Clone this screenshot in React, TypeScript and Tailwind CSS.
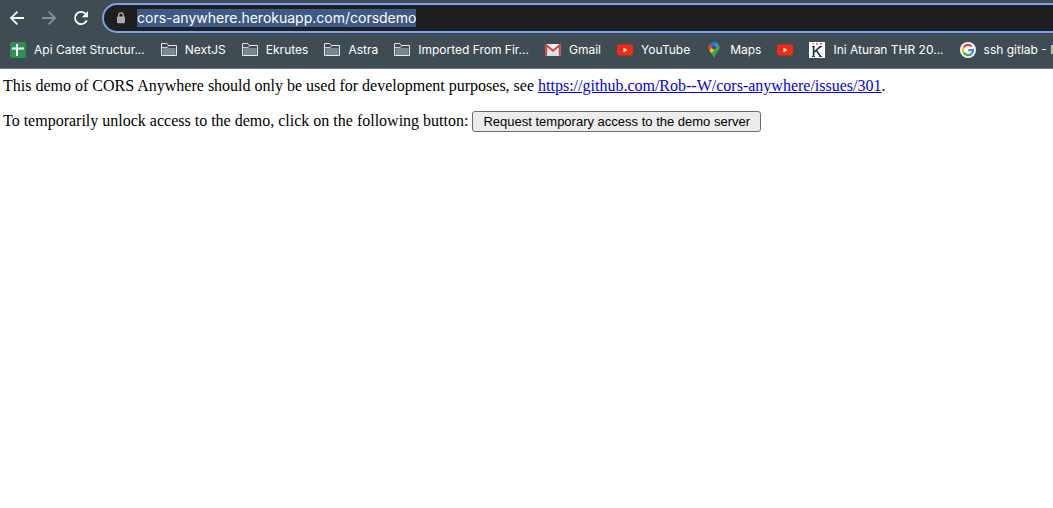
import React from "react";

function BackIcon({ flip = false }: { flip?: boolean }) {
  return (
    <svg viewBox="0 0 16 16" className={flip ? "size-4 -scale-x-100" : "size-4"} fill="none" stroke="currentColor" strokeWidth="1.8" aria-hidden="true">
      <path d="M15 8H2.4M8.4 1.6L2 8l6.4 6.4" />
    </svg>
  );
}

function ReloadIcon() {
  return (
    <svg viewBox="0 0 16 16" className="size-4" aria-hidden="true">
      <path d="M13.8 10.2A6.1 6.1 0 1 1 12.4 3.7" fill="none" stroke="currentColor" strokeWidth="1.8" />
      <path d="M15 1V7.2H8.8z" fill="currentColor" />
    </svg>
  );
}

function LockIcon() {
  return (
    <svg viewBox="0 0 10 12" className="h-3 w-2.5 shrink-0 text-[#a9adb2]" aria-hidden="true">
      <path d="M2.7 5.5V3.2a2.3 2.3 0 0 1 4.6 0v2.3" fill="none" stroke="currentColor" strokeWidth="1.3" />
      <rect x="1" y="4.6" width="8" height="6.6" rx="1" fill="currentColor" />
    </svg>
  );
}

function SheetIcon() {
  return (
    <svg viewBox="0 0 16 16" className="size-4 shrink-0" aria-hidden="true">
      <rect width="16" height="16" rx="1.5" fill="#2e9150" />
      <path d="M2 6.5h12M7 2v12" stroke="#fff" strokeWidth="2" />
    </svg>
  );
}

function FolderIcon() {
  return (
    <svg viewBox="0 0 16 16" className="size-4 shrink-0" aria-hidden="true">
      <path d="M.5 13.5v-12h5.3l1.7 2h8v10z" fill="#3f4c53" stroke="#e8eaed" strokeLinejoin="round" />
      <path d="M1.5 6h13v7h-13z" fill="#7d888d" />
      <path d="M1 5.5h5.4l1.3-1.8" fill="none" stroke="#e8eaed" strokeWidth=".8" />
    </svg>
  );
}

function GmailIcon() {
  return (
    <svg viewBox="0 0 16 16" className="size-4 shrink-0" aria-hidden="true">
      <rect x=".6" y="2" width="14.8" height="12" rx="1" fill="#f1f1f1" />
      <path d="M2.5 14L8 8.5l5.5 5.5z" fill="#dcdcdc" />
      <path d="M1.4 13.8V3.2L8 8.8l6.6-5.6v10.6" fill="none" stroke="#d93f32" strokeWidth="1.8" />
    </svg>
  );
}

function YouTubeIcon() {
  return (
    <svg viewBox="0 0 16 16" className="size-4 shrink-0" aria-hidden="true">
      <rect y="2.6" width="16" height="11" rx="2.8" fill="#f22c12" />
      <path d="M6.4 5.8v4.6l4-2.3z" fill="#fff" />
    </svg>
  );
}

function MapsIcon() {
  return (
    <svg viewBox="0 0 16 16" className="size-4 shrink-0" aria-hidden="true">
      <clipPath id="pin">
        <path d="M8 .2a5.4 5.4 0 0 0-5.4 5.4c0 3.8 3.5 5 4.7 9.4.2.8 1.2.8 1.4 0 1.2-4.4 4.7-5.6 4.7-9.4A5.4 5.4 0 0 0 8 .2z" />
      </clipPath>
      <g clipPath="url(#pin)">
        <path d="M0 0h16v16H0z" fill="#34a853" />
        <path d="M2 9.4L6.6 4 9.4 7 4.6 12.6z" fill="#fbbc04" />
        <path d="M9.4 7L6.6 4 10 0h6v3z" fill="#4285f4" transform="translate(-.4 .2)" />
        <path d="M0 9.6V1.4l3.9.7 2.9 2.4L2.6 9.4z" fill="#ea4335" />
        <path d="M3.6 2.2L6 0h6l-1.8.6L6.6 4.8z" fill="#1a73e8" />
        <path d="M13 2.4L9.6 6.6 12 8 16 4z" fill="#34a853" />
      </g>
      <circle cx="8" cy="5.6" r="1.9" fill="#3f4c53" />
    </svg>
  );
}

function KIcon() {
  return (
    <svg viewBox="0 0 16 16" className="size-4 shrink-0" aria-hidden="true">
      <path d="M0 0h16v16H0z" fill="#fff" />
      <path d="M3 4.6h3M3 14.4h3M10 4.6h3M10.4 14.4H13" stroke="#16294f" />
      <path d="M4.6 4.4v10.4M11.6 4.4L5.2 10M7.4 8.4l4.2 6.2" fill="none" stroke="#16294f" strokeWidth="1.6" />
      <path d="M3 1h2v1.6H3z" fill="#f5b52b" />
      <path d="M7 1h1.8v1.6H7z" fill="#e5404f" />
      <path d="M11 1h2v1.6h-2z" fill="#e5404f" />
    </svg>
  );
}

function GoogleIcon() {
  return (
    <svg viewBox="0 0 16 16" className="size-4 shrink-0" aria-hidden="true">
      <circle cx="8" cy="8" r="8" fill="#fff" />
      <g fill="none" strokeWidth="2.1">
        <path d="M3.6 5.4A5.1 5.1 0 0 1 11.7 4.4" stroke="#ea4335" />
        <path d="M3.6 10.6a5.1 5.1 0 0 1 0-5.2" stroke="#fbbc05" />
        <path d="M11.4 11.9a5.1 5.1 0 0 1-7.8-1.3" stroke="#34a853" />
        <path d="M8.2 8.1h4.9a5.1 5.1 0 0 1-1.7 3.8" stroke="#4285f4" />
      </g>
    </svg>
  );
}

const bookmarks: { label: string; icon: React.ReactNode }[] = [
  { label: "Api Catet Structur...", icon: <SheetIcon /> },
  { label: "NextJS", icon: <FolderIcon /> },
  { label: "Ekrutes", icon: <FolderIcon /> },
  { label: "Astra", icon: <FolderIcon /> },
  { label: "Imported From Fir...", icon: <FolderIcon /> },
  { label: "Gmail", icon: <GmailIcon /> },
  { label: "YouTube", icon: <YouTubeIcon /> },
  { label: "Maps", icon: <MapsIcon /> },
  { label: "", icon: <YouTubeIcon /> },
  { label: "Ini Aturan THR 20...", icon: <KIcon /> },
  { label: "ssh gitlab - I", icon: <GoogleIcon /> },
];

export default function App() {
  return (
    <div className="min-h-screen overflow-hidden bg-white">
      <header className="border-b border-[#6b767c] bg-[#3f4c53] font-['Inter',sans-serif] text-white">
        <div className="flex items-center pt-[3px] pl-[9px]">
          <nav className="flex w-[93px] shrink-0 gap-4" aria-label="History">
            <button type="button" aria-label="Back"><BackIcon /></button>
            <button type="button" aria-label="Forward" className="text-[#859097]"><BackIcon flip /></button>
            <button type="button" aria-label="Reload"><ReloadIcon /></button>
          </nav>
          <div className="-mr-4 flex h-[30px] grow items-center gap-[11px] rounded-l-full border-2 border-[#7f9ff0] bg-[#1e1f21] pl-3">
            <LockIcon />
            <input
              type="text"
              aria-label="Address"
              defaultValue="cors-anywhere.herokuapp.com/corsdemo"
              className="h-[18px] bg-[#3f5a86] text-sm text-white outline-none [field-sizing:content]"
            />
          </div>
        </div>
        <ul className="flex h-[35px] items-center gap-4 pb-[2px] pl-[10px] text-xs whitespace-nowrap">
          {bookmarks.map(({ label, icon }, i) => (
            <li key={i} className="shrink-0">
              <a href="#" className="flex items-center gap-2" aria-label={label || "YouTube"}>
                {icon}
                {label && <span>{label}</span>}
              </a>
            </li>
          ))}
        </ul>
      </header>
      <main className="space-y-4 px-[3px] pt-2 font-['Liberation_Serif',serif] text-base/[18px] text-black">
        <p>
          This demo of CORS Anywhere should only be used for development purposes, see{" "}
          <a href="https://github.com/Rob--W/cors-anywhere/issues/301" className="text-[#0000ee] underline">
            https://github.com/Rob--W/cors-anywhere/issues/301
          </a>
          .
        </p>
        <p>
          To temporarily unlock access to the demo, click on the following button:{" "}
          <button
            type="button"
            className="h-[21px] rounded-[3px] border border-[#6b6b6b] bg-[#ececec] px-[10px] font-['Liberation_Sans',sans-serif] text-[13px]/4"
          >
            Request temporary access to the demo server
          </button>
        </p>
      </main>
    </div>
  );
}
